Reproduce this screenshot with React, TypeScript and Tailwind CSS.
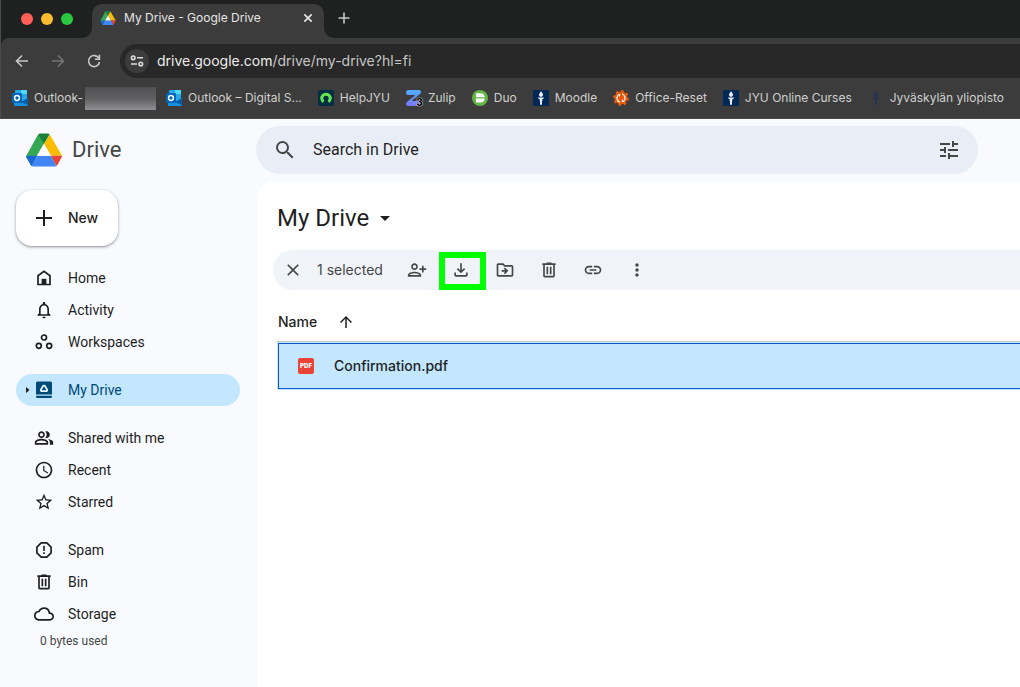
import type { ReactNode } from "react";
import {
  MdArrowDropDown,
  MdArrowUpward,
  MdClose,
  MdCloudQueue,
  MdLink,
  MdMoreVert,
  MdNotificationsNone,
  MdOutlineDriveFileMove,
  MdOutlinePeopleAlt,
  MdOutlinePersonAddAlt1,
  MdAccessTime,
  MdSearch,
  MdStarBorder,
  MdTune,
} from "react-icons/md";

/* ---------- drawings ---------- */

function DriveLogo({ className }: { className: string }) {
  return (
    <svg className={className} viewBox="0 0 36 33" aria-hidden="true">
      <path d="M13.500 0.500 18 10 11 22.200 6 32.500Q5 32 4.500 31L.6 24Q0 23 .6 21.700L11.500 2Q12.300.6 13.500.5Z" fill="#34a853" />
      <path d="M12.400 1Q13 0 14.300 0H21.700Q23 0 23.600 1L18 10.500Z" fill="#188038" />
      <path d="M23.600 1Q24 1.300 24.500 2.200L35.500 21.300Q35.800 21.800 35.900 22.200H25L18 10.500Z" fill="#fbbc04" />
      <path d="M36 22.200Q36 23.200 35.500 24L31.600 31Q31 32 30.200 32.500L25 22.200Z" fill="#ea4335" />
      <path d="M0 22.200H11L5.800 32.500Q5 32 4.500 31L.5 24Q0 23.200 0 22.200Z" fill="#1967d2" />
      <path d="M11 22.200H25L30.200 32.500Q29.500 33 28.500 33H7.500Q6.500 33 5.800 32.500Z" fill="#4285f4" />
      <path d="M18 10.500 25 22.200H11Z" fill="#fff" />
    </svg>
  );
}

function OutlookIcon() {
  return (
    <svg className="size-4" viewBox="0 0 16 16" aria-hidden="true">
      <rect x="3" y="0" width="12" height="11" rx="1" fill="#28a8ea" />
      <path d="M9 0h5q1 0 1 1v3H9z" fill="#50d9ff" />
      <path d="M3 4h6v4H3z" fill="#0078d4" />
      <path d="M2 8 9 12 16 8v7q0 1-1 1H3q-1 0-1-1z" fill="#1490df" />
      <path d="M9 12 16 8v7z" fill="#0a5ea8" />
      <rect x="0" y="3" width="10" height="10" rx="1" fill="#0364b8" />
      <circle cx="5" cy="8" r="2.4" fill="none" stroke="#fff" strokeWidth="1.5" />
    </svg>
  );
}

function HelpIcon() {
  return (
    <svg className="size-4" viewBox="0 0 16 16" aria-hidden="true">
      <rect width="16" height="16" rx="2" fill="#032d42" />
      <path d="M5.600 11.800A4.200 4.200 0 1 1 10.400 11.800" fill="none" stroke="#62e84e" strokeWidth="3" />
    </svg>
  );
}

function ZulipIcon() {
  return (
    <span className="relative block size-4">
      <svg className="size-4" viewBox="0 0 16 16" aria-hidden="true">
        <defs>
          <linearGradient id="zulip" x1="0" y1="0" x2="0" y2="16" gradientUnits="userSpaceOnUse">
            <stop offset="0" stopColor="#50adff" />
            <stop offset="1" stopColor="#7877fc" />
          </linearGradient>
        </defs>
        <path d="M2 0H13q2 0 2 2.200 0 1-1 1.800L7 9.800q-.4.2-.2-.2L8.800 5H2Q0 5 0 2.500T2 0z" fill="url(#zulip)" />
        <path d="M2 16H13q2 0 2-2.500T13 11H6.200L8.200 6.400q.2-.4-.2-.2L1 12q-1 .8-1 1.800Q0 16 2 16z" fill="url(#zulip)" />
      </svg>
      <span className="absolute -bottom-1 -right-px text-[10px] font-extrabold leading-4 text-black [text-shadow:0_0_1px_#ddd,0_0_1px_#ddd,0_0_1px_#ddd]">
        3
      </span>
    </span>
  );
}

function DuoIcon() {
  return (
    <svg className="size-4" viewBox="0 0 16 16" aria-hidden="true">
      <circle cx="8" cy="8" r="8" fill="#63b345" />
      <path d="M4 3.200h4.500a4.500 4.500 0 0 1 4.300 4H4z" fill="#fff" />
      <path d="M4 8.600h8.800a4.500 4.500 0 0 1-4.300 4H4z" fill="#fff" />
    </svg>
  );
}

function TorchIcon({ plain = false }: { plain?: boolean }) {
  const ink = plain ? "#22335a" : "#e8edf5";
  return (
    <svg className="size-4" viewBox="0 0 16 16" aria-hidden="true">
      {!plain && <rect width="16" height="16" rx="1.500" fill="#002957" />}
      <path d="M8 1c.3 1.200 2 2 2 3.700C10 6 9.200 6.800 8 6.800S6 6 6 4.700C6 3.500 7.600 2.400 8 1z" fill={ink} />
      <path d="M5 7.600h6l-.8 1.400H9v5.800H7V9H5.800z" fill={ink} />
      <path d="M6.200 9.600h3.600v.8H6.200z" fill={ink} />
    </svg>
  );
}

function ResetIcon() {
  return (
    <svg className="size-4" viewBox="0 0 16 16" aria-hidden="true">
      <circle cx="8" cy="8" r="6.500" fill="#e8590c" />
      <circle cx="8" cy="8" r="6.900" fill="none" stroke="#f0600f" strokeWidth="2" strokeDasharray="2.400 3.019" />
      <path d="M7 12a4.100 4.100 0 0 1-2-6.700M9 4a4.100 4.100 0 0 1 2 6.700" fill="none" stroke="#fff" strokeWidth="1.200" />
      <path d="M4.400 4.200 7.200 4 6.800 6.800zM11.600 11.800 8.800 12 9.200 9.200z" fill="#fff" />
    </svg>
  );
}

function SiteInfoIcon() {
  return (
    <svg className="size-4" viewBox="0 0 16 16" fill="none" stroke="#dcdcdc" strokeWidth="1.600" aria-hidden="true">
      <circle cx="4.200" cy="4.800" r="1.800" />
      <circle cx="11.800" cy="11" r="1.800" />
      <path d="M8 4.800h6M2 11h6" />
    </svg>
  );
}

function BackIcon() {
  return (
    <svg className="size-4" viewBox="0 0 16 16" fill="none" stroke="currentColor" strokeWidth="1.600" aria-hidden="true">
      <path d="M14 8H3M8 2.500 2.500 8 8 13.500" />
    </svg>
  );
}

function ForwardIcon() {
  return (
    <svg className="size-4" viewBox="0 0 16 16" fill="none" stroke="currentColor" strokeWidth="1.600" aria-hidden="true">
      <path d="M2 8h11M8 2.500 13.500 8 8 13.500" />
    </svg>
  );
}

function ReloadIcon() {
  return (
    <svg className="size-4" viewBox="0 0 16 16" fill="none" stroke="currentColor" strokeWidth="1.600" aria-hidden="true">
      <path d="M12.900 5.400A5.500 5.500 0 1 0 13.500 9" />
      <path d="M13.400 1.800v4.500H9" />
    </svg>
  );
}

function HomeIcon() {
  return (
    <svg className="size-5" viewBox="0 0 20 20" aria-hidden="true">
      <path d="M4 16.500V7.800L10 3.400l6 4.400v8.700z" fill="none" stroke="currentColor" strokeWidth="1.700" />
      <path d="M7.600 10.800h4.800v5.700H7.600z" fill="currentColor" />
    </svg>
  );
}

function WorkspacesIcon() {
  return (
    <svg className="size-5" viewBox="0 0 20 20" fill="none" stroke="currentColor" strokeWidth="1.700" aria-hidden="true">
      <circle cx="10" cy="5.500" r="2.500" />
      <circle cx="4.800" cy="13.800" r="2.500" />
      <circle cx="15.200" cy="13.800" r="2.500" />
    </svg>
  );
}

function MyDriveIcon() {
  return (
    <svg className="size-5" viewBox="0 0 20 20" aria-hidden="true">
      <path d="M3.500 1.500h13Q18 1.500 18 3v11.500H2V3q0-1.500 1.500-1.500z" fill="#004a77" />
      <path d="M2 15.800h16v.7q0 1.500-1.500 1.500h-13Q2 18 2 16.500z" fill="#004a77" />
      <path d="M9.300 5.600h1.400L13.300 10l-.7 1.200H7.400L6.700 10z" fill="none" stroke="#e5f4ff" strokeWidth="1.800" strokeLinejoin="round" />
    </svg>
  );
}

function SpamIcon() {
  return (
    <svg className="size-5" viewBox="0 0 20 20" aria-hidden="true">
      <path
        d="M7.200 2.900h5.600l4.300 4.300v5.600l-4.300 4.300H7.200l-4.300-4.300V7.200z"
        fill="none"
        stroke="currentColor"
        strokeWidth="1.700"
        strokeLinejoin="round"
      />
      <path d="M9.200 5.800h1.600v5.200H9.200zM9.200 12.200h1.600v1.700H9.200z" fill="currentColor" />
    </svg>
  );
}

function BinIcon() {
  return (
    <svg className="size-5" viewBox="0 -960 960 960" fill="currentColor" aria-hidden="true">
      <path d="M280-120q-33 0-56.500-23.500T200-200v-520h-40v-80h200v-40h240v40h200v80h-40v520q0 33-23.500 56.500T680-120H280Zm400-600H280v520h400v-520ZM360-280h80v-360h-80v360Zm160 0h80v-360h-80v360Z" />
    </svg>
  );
}

function DownloadIcon() {
  return (
    <svg className="size-5" viewBox="0 -960 960 960" fill="currentColor" aria-hidden="true">
      <path d="M480-320 280-520l56-58 104 104v-326h80v326l104-104 56 58-200 200ZM240-160q-33 0-56.500-23.500T160-240v-120h80v120h480v-120h80v120q0 33-23.500 56.500T720-160H240Z" />
    </svg>
  );
}

/* ---------- browser chrome ---------- */

type BookmarkProps = { icon: ReactNode; label: string; children?: ReactNode };

function Bookmark({ icon, label, children }: BookmarkProps) {
  return (
    <a href="#" className="flex shrink-0 items-center gap-1.5 whitespace-nowrap text-xs text-[#d0d0d0]">
      {icon}
      <span>{label}</span>
      {children}
    </a>
  );
}

function BrowserChrome() {
  return (
    <header className="overflow-hidden border-l border-[#4a4c4c] bg-[#1f2120] font-['Inter',sans-serif]">
      <div className="flex h-[38px] items-end">
        <div className="flex h-full w-20 shrink-0 items-center gap-2 pl-5">
          <span className="size-3 rounded-full bg-[#ff5f57]" />
          <span className="size-3 rounded-full bg-[#febc2e]" />
          <span className="size-3 rounded-full bg-[#28c840]" />
        </div>
        <span className="h-3 w-[11px] bg-[#3c3c3c]">
          <span className="block size-full rounded-br-[10px] bg-[#1f2120]" />
        </span>
        <div className="flex h-[34px] w-[232px] shrink-0 items-center rounded-t-[10px] bg-[#3c3c3c] pb-1.5 pl-2 pr-2.5">
          <DriveLogo className="h-[14px] w-4" />
          <span className="ml-2 flex-1 whitespace-nowrap text-xs text-[#e6e6e6]">My Drive - Google Drive</span>
          <button aria-label="Close tab" className="text-[#e3e3e3]">
            <svg className="size-3" viewBox="0 0 12 12" stroke="currentColor" strokeWidth="1.700" aria-hidden="true">
              <path d="M2.300 2.300 9.700 9.700M9.700 2.300 2.300 9.700" />
            </svg>
          </button>
        </div>
        <span className="h-3 w-[11px] bg-[#3c3c3c]">
          <span className="block size-full rounded-bl-[10px] bg-[#1f2120]" />
        </span>
        <button aria-label="New tab" className="flex h-full items-center pb-0.5 pl-px text-[#c8c8c8]">
          <svg className="size-4" viewBox="0 0 16 16" stroke="currentColor" strokeWidth="1.600" aria-hidden="true">
            <path d="M8 2.500v11M2.500 8h11" />
          </svg>
        </button>
      </div>

      <div className="rounded-tl-lg border-b border-[#494949] bg-[#3c3c3c]">
        <div className="flex items-center pl-[13px] pt-1.5">
          <div className="flex items-center gap-5 text-[#c8c8c8]">
            <button aria-label="Back">
              <BackIcon />
            </button>
            <button aria-label="Forward" className="text-[#757575]">
              <ForwardIcon />
            </button>
            <button aria-label="Reload">
              <ReloadIcon />
            </button>
          </div>
          <div className="-mr-5 ml-[18px] flex h-[34px] flex-1 items-center gap-2 rounded-full bg-[#282828] pl-[5px]">
            <button aria-label="Site information" className="flex size-6 items-center justify-center rounded-full bg-[#3c3c3c]">
              <SiteInfoIcon />
            </button>
            <span className="whitespace-nowrap text-sm text-[#c7c7c7]">
              <span className="text-[#ececec]">drive.google.com</span>/drive/my-drive?hl=fi
            </span>
          </div>
        </div>
        <nav aria-label="Bookmarks" className="flex h-10 items-center gap-2.5 pl-[11px]">
          <Bookmark icon={<OutlookIcon />} label="Outlook-">
            <span className="-ml-1 h-[23px] w-[71px] bg-linear-to-b from-[#505052] via-[#606062] to-[#909093]" />
          </Bookmark>
          <div className="flex items-center gap-4">
            <Bookmark icon={<OutlookIcon />} label="Outlook – Digital S..." />
            <Bookmark icon={<HelpIcon />} label="HelpJYU" />
            <Bookmark icon={<ZulipIcon />} label="Zulip" />
            <Bookmark icon={<DuoIcon />} label="Duo" />
            <Bookmark icon={<TorchIcon />} label="Moodle" />
            <Bookmark icon={<ResetIcon />} label="Office-Reset" />
            <Bookmark icon={<TorchIcon />} label="JYU Online Curses" />
            <Bookmark icon={<TorchIcon plain />} label="Jyväskylän yliopisto" />
          </div>
        </nav>
      </div>
    </header>
  );
}

/* ---------- sidebar ---------- */

type Item = { label: string; icon: ReactNode; active?: boolean };

const groups: Item[][] = [
  [
    { label: "Home", icon: <HomeIcon /> },
    { label: "Activity", icon: <MdNotificationsNone className="size-5" /> },
    { label: "Workspaces", icon: <WorkspacesIcon /> },
  ],
  [{ label: "My Drive", icon: <MyDriveIcon />, active: true }],
  [
    { label: "Shared with me", icon: <MdOutlinePeopleAlt className="size-5" /> },
    { label: "Recent", icon: <MdAccessTime className="size-5" /> },
    { label: "Starred", icon: <MdStarBorder className="size-5" /> },
  ],
  [
    { label: "Spam", icon: <SpamIcon /> },
    { label: "Bin", icon: <BinIcon /> },
    { label: "Storage", icon: <MdCloudQueue className="size-5" /> },
  ],
];

function Sidebar() {
  return (
    <aside className="w-[257px] shrink-0 pl-4 pr-[17px] pt-2 font-['Roboto',sans-serif]">
      <button className="flex h-14 items-center gap-3 rounded-2xl bg-white pl-4 pr-5 font-['Inter',sans-serif] text-sm font-medium text-[#1f1f1f] shadow-[0_1px_2px_rgba(60,64,67,0.4),0_1px_3px_1px_rgba(60,64,67,0.15)]">
        <svg className="size-6" viewBox="0 0 24 24" stroke="currentColor" strokeWidth="2" aria-hidden="true">
          <path d="M12 4v16M4 12h16" />
        </svg>
        New
      </button>
      <nav aria-label="Drive sections" className="mt-4 flex flex-col gap-4">
        {groups.map((group) => (
          <ul key={group[0].label}>
            {group.map((item) => (
              <li key={item.label}>
                <a
                  href="#"
                  className={
                    item.active
                      ? "flex h-8 items-center rounded-full bg-[#c2e7ff] pl-[9px] text-sm text-[#004a77]"
                      : "flex h-8 items-center pl-[9px] text-sm text-[#1f1f1f]"
                  }
                >
                  <span className="flex w-[9px] items-center">
                    {item.active && (
                      <svg className="h-2 w-[5px]" viewBox="0 0 5 8" aria-hidden="true">
                        <path d="M1 1v6l3.500-3z" fill="#1f1f1f" />
                      </svg>
                    )}
                  </span>
                  {item.icon}
                  <span className="ml-[14px]">{item.label}</span>
                </a>
              </li>
            ))}
          </ul>
        ))}
      </nav>
      <p className="pl-6 pt-0.5 text-xs leading-[18px] text-[#444746]">0 bytes used</p>
    </aside>
  );
}

/* ---------- main ---------- */

function ToolButton({ label, children }: { label: string; children: ReactNode }) {
  return (
    <button aria-label={label} className="flex size-8 shrink-0 items-center justify-center text-[#444746]">
      {children}
    </button>
  );
}

function SelectionToolbar() {
  return (
    <div role="toolbar" aria-label="Selection" className="ml-4 flex h-10 items-center rounded-l-full bg-[#f0f4f9] pl-1">
      <ToolButton label="Clear selection">
        <MdClose className="size-5" />
      </ToolButton>
      <span className="ml-2 w-[84px] whitespace-nowrap text-sm text-[#444746]">1 selected</span>
      <div className="flex items-center gap-3">
        <ToolButton label="Share">
          <MdOutlinePersonAddAlt1 className="size-5" />
        </ToolButton>
        <div className="relative">
          <ToolButton label="Download">
            <DownloadIcon />
          </ToolButton>
          <span className="pointer-events-none absolute -left-1.5 -top-0.5 h-[38px] w-[47px] border-[6px] border-[#00ff00]" />
        </div>
        <ToolButton label="Move">
          <MdOutlineDriveFileMove className="size-5" />
        </ToolButton>
        <ToolButton label="Move to bin">
          <BinIcon />
        </ToolButton>
        <ToolButton label="Copy link">
          <MdLink className="size-5" />
        </ToolButton>
        <ToolButton label="More actions">
          <MdMoreVert className="size-5" />
        </ToolButton>
      </div>
    </div>
  );
}

export default function App() {
  return (
    <div className="flex min-h-screen flex-col overflow-x-hidden bg-[#f8fafd] font-['Inter',sans-serif] text-[#1f1f1f]">
      <BrowserChrome />

      <div className="flex items-center pb-2 pr-[42px] pt-[7px] font-['Roboto',sans-serif]">
        <a href="#" className="flex w-64 shrink-0 items-center gap-2.5 pl-[26px] text-[22px] leading-8 text-[#444746]">
          <DriveLogo className="h-[34px] w-9" />
          Drive
        </a>
        <div className="flex h-12 flex-1 items-center rounded-full bg-[#e9eef6] px-[17px]">
          <button aria-label="Search" className="text-[#444746]">
            <MdSearch className="size-6" />
          </button>
          <input
            type="text"
            aria-label="Search in Drive"
            placeholder="Search in Drive"
            className="ml-4 min-w-0 flex-1 bg-transparent text-base text-[#1f1f1f] outline-none placeholder:text-[#1f1f1f]"
          />
          <button aria-label="Search options" className="text-[#444746]">
            <MdTune className="size-6" />
          </button>
        </div>
      </div>

      <div className="flex flex-1">
        <Sidebar />
        <main className="min-w-0 flex-1 rounded-tl-2xl bg-white pt-5">
          <h1 className="ml-5">
            <button className="flex items-center gap-1 font-['Roboto',sans-serif] text-2xl">
              My Drive
              <MdArrowDropDown className="size-6" />
            </button>
          </h1>
          <div className="mt-4">
            <SelectionToolbar />
          </div>
          <div className="pl-5 pt-3">
            <table className="w-full border-separate border-spacing-0">
              <thead>
                <tr>
                  <th scope="col" className="h-10 border-b border-[#c7c7c7] p-0 pl-px text-left text-sm font-medium">
                    <button className="flex items-center gap-5">
                      Name
                      <MdArrowUpward className="size-[18px]" />
                    </button>
                  </th>
                </tr>
              </thead>
              <tbody>
                <tr aria-selected="true">
                  <td className="bg-[#c2e7ff] py-px pl-px pr-0">
                    <div className="flex h-[46px] items-center gap-5 border-y border-l border-[#0b57d0] pl-[19px]">
                      <span className="flex size-4 items-center justify-center overflow-hidden rounded-[2px] bg-[#ea4335] text-[6px] font-black leading-none text-white">
                        PDF
                      </span>
                      <span className="text-sm font-medium">Confirmation.pdf</span>
                    </div>
                  </td>
                </tr>
              </tbody>
            </table>
          </div>
        </main>
      </div>
    </div>
  );
}
